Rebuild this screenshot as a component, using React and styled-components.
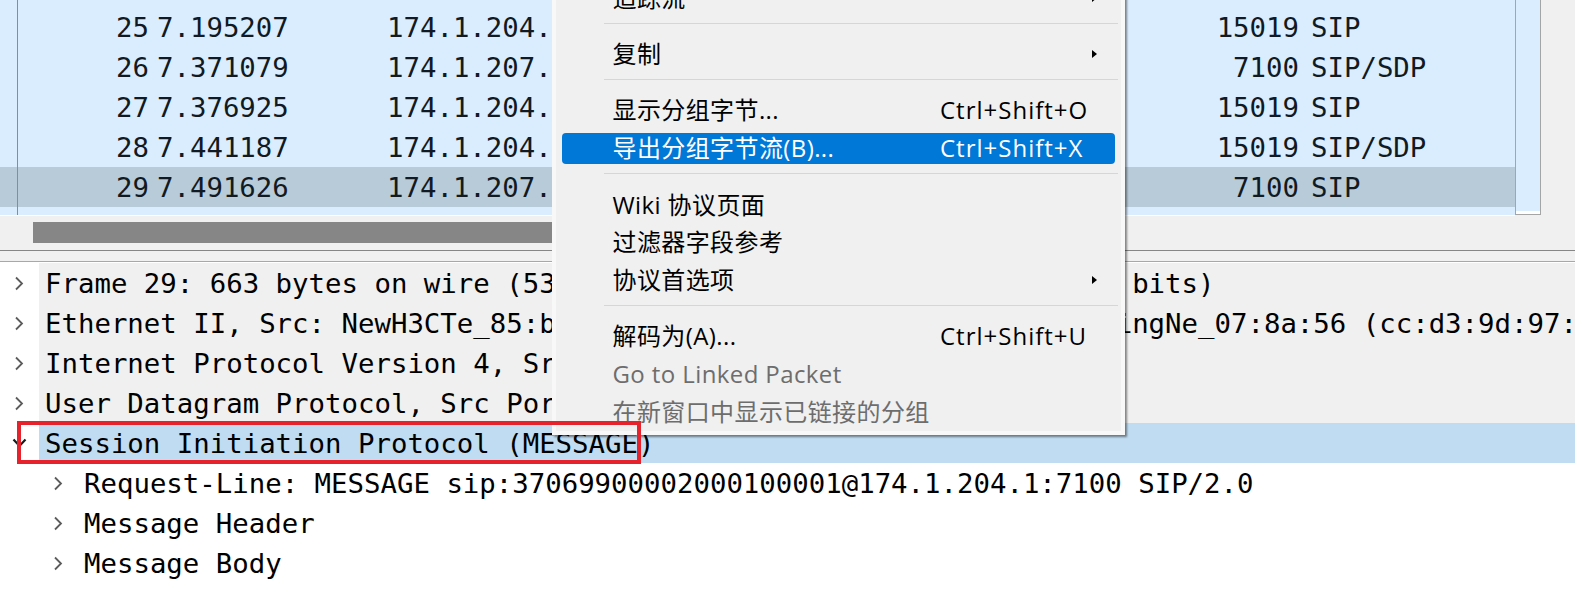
import React from 'react';
import styled, { createGlobalStyle } from 'styled-components';

const GlobalStyle = createGlobalStyle`
  html, body {
    margin: 0;
    padding: 0;
    background: #ffffff;
  }
  #root {
    width: 1575px;
    height: 592px;
  }
`;

const MONO = `"DejaVu Sans Mono", "Liberation Mono", monospace`;
const UI = `"Open Sans", "Noto Sans CJK SC", sans-serif`;

const packets = [
  { no: 25, time: '7.195207', src: '174.1.204.1', dst: '174.1.207.1', port: '15019', proto: 'SIP' },
  { no: 26, time: '7.371079', src: '174.1.207.1', dst: '174.1.204.1', port: '7100', proto: 'SIP/SDP' },
  { no: 27, time: '7.376925', src: '174.1.204.1', dst: '174.1.207.1', port: '15019', proto: 'SIP' },
  { no: 28, time: '7.441187', src: '174.1.204.1', dst: '174.1.207.1', port: '15019', proto: 'SIP/SDP' },
  { no: 29, time: '7.491626', src: '174.1.207.1', dst: '174.1.204.1', port: '7100', proto: 'SIP', selected: true },
];

const tree = [
  { level: 0, text: 'Frame 29: 663 bytes on wire (5304 bits), 663 bytes captured (5304 bits)', bg: '#f0f0f0' },
  { level: 0, text: 'Ethernet II, Src: NewH3CTe_85:b4:31 (3c:e8:24:85:b4:31), Dst: SuningNe_07:8a:56 (cc:d3:9d:97:8a:56)', bg: '#f0f0f0' },
  { level: 0, text: 'Internet Protocol Version 4, Src: 174.1.207.1, Dst: 174.1.204.1', bg: '#f0f0f0' },
  { level: 0, text: 'User Datagram Protocol, Src Port: 7100, Dst Port: 15019', bg: '#f0f0f0' },
  { level: 0, text: 'Session Initiation Protocol (MESSAGE)', bg: '#bfdcf2', open: true, marked: true },
  { level: 1, text: 'Request-Line: MESSAGE sip:37069900002000100001@174.1.204.1:7100 SIP/2.0' },
  { level: 1, text: 'Message Header' },
  { level: 1, text: 'Message Body' },
];

const menu = [
  { label: '追踪流', sub: true },
  { sep: true },
  { label: '复制', sub: true },
  { sep: true },
  { label: '显示分组字节...', key: 'Ctrl+Shift+O' },
  { label: '导出分组字节流(B)...', key: 'Ctrl+Shift+X', active: true },
  { sep: true },
  { label: 'Wiki 协议页面' },
  { label: '过滤器字段参考' },
  { label: '协议首选项', sub: true },
  { sep: true },
  { label: '解码为(A)...', key: 'Ctrl+Shift+U' },
  { label: 'Go to Linked Packet', disabled: true },
  { label: '在新窗口中显示已链接的分组', disabled: true },
];

const App = () => {
  return (
    <Page>
      <GlobalStyle />
      <TopPane>
        <PacketList>
          {packets.map(p => (
            <PacketRow key={p.no} $selected={p.selected}>
              <Cell $align="right">{p.no}</Cell>
              <Cell $pad={8}>{p.time}</Cell>
              <Cell $pad={1}>{p.src}</Cell>
              <Cell $pad={1}>{p.dst}</Cell>
              <Cell $align="right">{p.port}</Cell>
              <Cell $pad={12}>{p.proto}</Cell>
            </PacketRow>
          ))}
        </PacketList>
        <VScroll />
      </TopPane>
      <HScroll>
        <Thumb />
      </HScroll>
      <Splitter />
      <Tree>
        {tree.map((n, i) => (
          <TreeRow key={i}>
            <Indent $level={n.level} />
            <ArrowCell $open={n.open}>
              {n.open ? (
                <svg width="15" height="10" viewBox="0 0 15 10">
                  <polyline points="1.5,1.5 7.5,8 13.5,1.5" fill="none" stroke="#1a1a1a" strokeWidth="2.2" />
                </svg>
              ) : (
                <svg width="10" height="15" viewBox="0 0 10 15">
                  <polyline points="2,1.5 8,7.5 2,13.5" fill="none" stroke="#5c5c5c" strokeWidth="1.8" />
                </svg>
              )}
            </ArrowCell>
            <Label $bg={n.bg}>{n.text}</Label>
            {n.marked && <Annotation />}
          </TreeRow>
        ))}
      </Tree>

      <Menu>
        {menu.map((m, i) =>
          m.sep ? (
            <Separator key={i}><SepLine /></Separator>
          ) : (
            <MenuItem key={i}>
              <ItemBody $active={m.active} $disabled={m.disabled}>
                <span>{m.label}</span>
                <Shortcut>
                  {m.key}
                  {m.sub && <SubArrow />}
                </Shortcut>
              </ItemBody>
            </MenuItem>
          )
        )}
      </Menu>
    </Page>
  );
};

export default App;


const Page = styled.div`
  position: relative;
  width: 1575px;
  height: 592px;
  overflow: hidden;
  background: #ffffff;
  display: flex;
  flex-direction: column;
`

const TopPane = styled.div`
  display: flex;
  height: 216px;
  flex: 0 0 auto;
  background: #f0f0f0;
`

const PacketList = styled.div`
  position: relative;
  width: 1515px;
  height: 216px;
  box-sizing: border-box;
  padding-top: 7px;
  background: #daedff;
  border-bottom: 1px solid #ffffff;
  overflow: hidden;
  font-family: ${MONO};
  font-size: 27.37px;
  color: #111a22;

  &::after {
    content: '';
    position: absolute;
    left: 17px;
    top: 0;
    bottom: 0;
    width: 1px;
    background: #8c8c8c;
  }
`

const PacketRow = styled.div`
  display: grid;
  grid-template-columns: 149px 237px 254px 460px 199px 1fr;
  align-items: center;
  height: 40px;
  background: ${({ $selected }) => ($selected ? '#b8cbd9' : 'transparent')};
`

const Cell = styled.div`
  white-space: pre;
  overflow: hidden;
  text-align: ${({ $align }) => $align || 'left'};
  padding-left: ${({ $pad }) => $pad || 0}px;
`

const VScroll = styled.div`
  width: 26px;
  height: 215px;
  box-sizing: border-box;
  background: #daedff;
  border: 1px solid #a5a5a5;
  border-top: none;
  box-shadow: inset 0 -3px 0 #ffffff;
`

const HScroll = styled.div`
  height: 34px;
  box-sizing: border-box;
  padding: 6px 0 7px 33px;
  background: #f0f0f0;
  flex: 0 0 auto;
`

const Thumb = styled.div`
  width: 760px;
  height: 21px;
  background: #868686;
`

const Splitter = styled.div`
  height: 12px;
  box-sizing: border-box;
  flex: 0 0 auto;
  background: #f0f0f0;
  border-top: 1px solid #868686;
  border-bottom: 1px solid #a8a8a8;
`

const Tree = styled.div`
  padding-top: 1px;
  font-family: ${MONO};
  font-size: 27.37px;
  color: #000000;
`

const TreeRow = styled.div`
  position: relative;
  display: flex;
  height: 40px;
`

const Indent = styled.div`
  flex: 0 0 ${({ $level }) => $level * 39}px;
`

const ArrowCell = styled.div`
  flex: 0 0 39px;
  box-sizing: border-box;
  display: flex;
  align-items: center;
  padding-left: ${({ $open }) => ($open ? 12 : 14)}px;
`

const Label = styled.div`
  flex: 1;
  display: flex;
  align-items: center;
  padding-left: 6px;
  white-space: pre;
  overflow: hidden;
  background: ${({ $bg }) => $bg || 'transparent'};
`

const Annotation = styled.div`
  position: absolute;
  left: 17px;
  top: -2px;
  width: 624px;
  height: 43px;
  box-sizing: border-box;
  border: 4px solid #e6232c;
  z-index: 5;
`

const Menu = styled.div`
  position: absolute;
  left: 552px;
  top: -25px;
  width: 573px;
  box-sizing: border-box;
  background: #f0f0f0;
  border: 4px solid #f8f8f8;
  box-shadow: 2px 2px 2px rgba(0, 0, 0, 0.45);
  font-family: ${UI};
  font-size: 24px;
  line-height: 24px;
  letter-spacing: 0.4px;
  z-index: 3;
`

const MenuItem = styled.div`
  height: 37.8px;
  box-sizing: border-box;
  padding: 3.6px 6px 3.6px 5.5px;
`

const ItemBody = styled.div`
  height: 100%;
  box-sizing: border-box;
  display: grid;
  grid-template-columns: 327.5px 1fr;
  align-content: center;
  align-items: center;
  padding-left: 51px;
  border-radius: 4px;
  white-space: nowrap;
  background: ${({ $active }) => ($active ? '#0078d7' : 'transparent')};
  color: ${({ $active, $disabled }) => ($active ? '#ffffff' : $disabled ? '#6d6d6d' : '#000000')};
`

const Shortcut = styled.div`
  display: flex;
  align-items: center;
  justify-content: space-between;
  padding-right: 18px;
  letter-spacing: 1px;
`

const SubArrow = styled.span`
  margin-left: auto;
  width: 0;
  height: 0;
  border-left: 5px solid #000000;
  border-top: 4px solid transparent;
  border-bottom: 4px solid transparent;
`

const Separator = styled.div`
  height: 18.5px;
  box-sizing: border-box;
  padding-top: 6px;
`

const SepLine = styled.div`
  height: 1px;
  margin: 0 3px 0 48px;
  background: #d6d6d6;
`
